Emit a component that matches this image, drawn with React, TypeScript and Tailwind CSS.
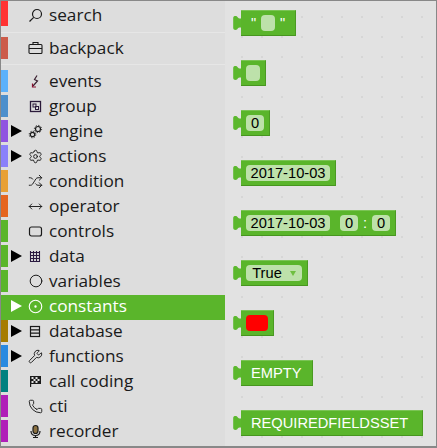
import {
  Circle,
  CircleDot,
  MoveHorizontal,
  Phone,
  Settings,
  Shuffle,
  Wrench,
} from 'lucide-react'
import type { ReactNode } from 'react'

const iconClass = 'w-[15px] h-[15px] stroke-[1.5]'

function SearchIcon() {
  return (
    <svg viewBox="0 0 15 15" className="w-[15px] h-[15px]" fill="none" stroke="currentColor" strokeWidth="1.200">
      <circle cx="9" cy="6" r="4.500" />
      <path d="M5.700 9.300 1.500 13.500" />
    </svg>
  )
}

function GroupIcon() {
  return (
    <svg viewBox="0 0 15 15" className="w-[15px] h-[15px]" fill="none" stroke="#2a1a3a">
      <rect x="2.500" y="2.500" width="10" height="10" strokeWidth="1.300" />
      <rect x="5" y="5" width="3" height="3" />
      <rect x="7.500" y="7.500" width="3" height="3" />
    </svg>
  )
}

function EventIcon() {
  return (
    <svg viewBox="0 0 15 15" className="w-[15px] h-[15px]" fill="none" stroke="#3a2030" strokeWidth="1.200">
      <path d="M9 1.500 6.500 5.500 9.500 7 5 12" />
      <path d="M4.500 9.500V13H8" stroke="#8a1030" />
    </svg>
  )
}

function BackpackIcon() {
  return (
    <svg viewBox="0 0 15 15" className="w-[15px] h-[15px]" fill="none" stroke="currentColor" strokeWidth="1.100">
      <rect x="1" y="3.500" width="13" height="9" rx="1" />
      <path d="M5 3.500v-2h5v2M1 7.500h13" />
    </svg>
  )
}

function EngineIcon() {
  return (
    <svg viewBox="0 0 15 15" className="w-[15px] h-[15px]" fill="none" stroke="currentColor">
      <circle cx="10" cy="5" r="2.500" strokeWidth="1.200" />
      <circle cx="10" cy="5" r="3.600" strokeWidth="1" strokeDasharray="1.200 1.600" />
      <circle cx="4.500" cy="10.500" r="2.200" strokeWidth="1.200" />
      <circle cx="4.500" cy="10.500" r="3.300" strokeWidth="1" strokeDasharray="1.200 1.400" />
    </svg>
  )
}

function ControlsIcon() {
  return (
    <svg viewBox="0 0 15 15" className="w-[15px] h-[15px]" fill="none" stroke="currentColor" strokeWidth="1.200">
      <rect x="1.500" y="3" width="12" height="9" rx="2" />
    </svg>
  )
}

function GridIcon() {
  return (
    <svg viewBox="0 0 15 15" className="w-[15px] h-[15px]" fill="none" stroke="#2a1a40" strokeWidth="1.100">
      <path d="M2.500 2v11M5.500 2v11M8.500 2v11M11.500 2v11M2 3.500h10M2 6.500h10M2 9.500h10M2 12.500h10" />
    </svg>
  )
}

function DatabaseIcon() {
  return (
    <svg viewBox="0 0 15 15" className="w-[15px] h-[15px]" fill="none" stroke="currentColor" strokeWidth="1.200">
      <rect x="2.500" y="2.500" width="9" height="10" />
      <path d="M2.500 5.800h9M2.500 9.200h9" />
    </svg>
  )
}

function FlagIcon() {
  return (
    <svg viewBox="0 0 15 15" className="w-[15px] h-[15px]" fill="#1a1a1a">
      <path d="M2 2h11v8H2zM2 10h1.200v3H2z" />
      <path
        fill="#e0e0e0"
        d="M3.500 3h2v2h-2zM7.500 3h2v2h-2zM5.500 5h2v2h-2zM9.500 5h2v2h-2zM3.500 7h2v2h-2zM7.500 7h2v2h-2z"
      />
    </svg>
  )
}

function MicIcon() {
  return (
    <svg viewBox="0 0 15 15" className="w-[15px] h-[15px]" fill="none" stroke="currentColor" strokeWidth="1.200">
      <rect x="5" y="1.500" width="5" height="8" rx="2.500" fill="#8a7040" />
      <path d="M3 7c0 3 2 4.500 4.500 4.500S12 10 12 7M7.500 11.500V13M5 13.500h5" />
    </svg>
  )
}

const categories: {
  label: string
  color: string
  icon: ReactNode
  arrow?: boolean
  selected?: boolean
}[] = [
  { label: 'events', color: 'bg-[#5cb1fa]', icon: <EventIcon /> },
  { label: 'group', color: 'bg-[#4c8fcc]', icon: <GroupIcon /> },
  { label: 'engine', color: 'bg-[#9053e0]', icon: <EngineIcon />, arrow: true },
  { label: 'actions', color: 'bg-[#8a80fa]', icon: <Settings className={iconClass} />, arrow: true },
  { label: 'condition', color: 'bg-[#e8a035]', icon: <Shuffle className={iconClass} /> },
  { label: 'operator', color: 'bg-[#e5651f]', icon: <MoveHorizontal className={iconClass} /> },
  { label: 'controls', color: 'bg-[#5ab52b]', icon: <ControlsIcon /> },
  { label: 'data', color: 'bg-[#5ab52b]', icon: <GridIcon />, arrow: true },
  { label: 'variables', color: 'bg-[#5ab52b]', icon: <Circle className="w-[14px] h-[14px] stroke-[1.7]" /> },
  { label: 'constants', color: 'bg-[#5ab52b]', icon: <CircleDot className="w-[15px] h-[15px] stroke-[1.8]" />, arrow: true, selected: true },
  { label: 'database', color: 'bg-[#a67c00]', icon: <DatabaseIcon />, arrow: true },
  { label: 'functions', color: 'bg-[#2a8ae0]', icon: <Wrench className={iconClass} />, arrow: true },
  { label: 'call coding', color: 'bg-[#00807f]', icon: <FlagIcon /> },
  { label: 'cti', color: 'bg-[#b01fb8]', icon: <Phone className={iconClass} /> },
  { label: 'recorder', color: 'bg-[#b01fb8]', icon: <MicIcon /> },
]

function Arrow({ selected }: { selected?: boolean }) {
  return (
    <svg viewBox="0 0 11 12" className={`w-[11px] h-3 ${selected ? 'fill-white' : 'fill-black'}`}>
      <path d="M0 0l11 6-11 6z" />
    </svg>
  )
}

function Row({
  label,
  color,
  icon,
  arrow,
  selected,
}: (typeof categories)[number]) {
  return (
    <div
      className={`flex h-[25px] ${selected ? 'bg-[#5ab52b] text-white' : 'text-[#1a1a1a]'}`}
    >
      <div className={`w-[7px] h-[22px] ${selected ? '' : color}`} />
      <div className="flex flex-1 h-[22px] items-center">
        <div className="w-5 pl-[3px]">{arrow ? <Arrow selected={selected} /> : null}</div>
        <div className="w-[15px] flex justify-center">{icon}</div>
        <span className="ml-[6px] leading-none">{label}</span>
      </div>
    </div>
  )
}

function Tab() {
  return (
    <svg viewBox="0 0 8 14" className="w-2 h-[14px] mt-[6px] fill-[#5cb82e]">
      <path d="M8 2.500H6.500C5.300 2.500 5 1.500 4 .6 2.800-.3.2 0 .2 2v10c0 2 2.600 2.300 3.800 1.400 1-.9 1.300-1.900 2.500-1.900H8z" />
    </svg>
  )
}

function Field({
  children,
  width,
  tone = 'bg-[#bde1aa]',
}: {
  children?: ReactNode
  width: string
  tone?: string
}) {
  return (
    <div className={`h-4 ${width} ${tone} rounded-[4px] flex items-center justify-center text-black`}>
      {children}
    </div>
  )
}

function Block({ width, children }: { width: string; children: ReactNode }) {
  return (
    <div className="flex h-[26px] ml-[8px] font-['Liberation_Sans',sans-serif] text-[14.667px] leading-none">
      <Tab />
      <div
        className={`${width} h-[26px] bg-[#5ab52b] border-t border-t-[#7bc455] border-r border-r-[#4a9a22] border-b border-b-[#47951f] flex items-center pl-[5px] text-white`}
      >
        {children}
      </div>
    </div>
  )
}

function PinnedRow({
  label,
  color,
  icon,
  className,
  barClass,
}: {
  label: string
  color: string
  icon: ReactNode
  className: string
  barClass: string
}) {
  return (
    <div className={`h-8 border-b border-b-[#e6e6e6] text-[#1a1a1a] flex ${className}`}>
      <div className={`w-[7px] ${barClass} ${color}`} />
      <div className="w-5" />
      <div className="w-[15px] flex justify-center items-center">{icon}</div>
      <span className="ml-[6px] leading-none self-center">{label}</span>
    </div>
  )
}

export default function App() {
  return (
    <div className="w-[437px] h-[448px] overflow-hidden border border-b-2 border-[#888] flex font-['Open_Sans',sans-serif] text-[17.2px]">
      <aside className="w-[224px] bg-[#dddddd] flex flex-col">
        <PinnedRow
          label="search"
          color="bg-[#ff3333]"
          icon={<SearchIcon />}
          className="pb-[3px]"
          barClass="h-[25px]"
        />
        <PinnedRow
          label="backpack"
          color="bg-[#cc5b4a]"
          icon={<BackpackIcon />}
          className="pt-[4px] pb-[5px]"
          barClass="h-[22px]"
        />
        <div className="flex flex-col mt-[5px]">
          {categories.map((category) => (
            <Row key={category.label} {...category} />
          ))}
        </div>
      </aside>
      <main className="flex-1 bg-[#e2e2e2] bg-[radial-gradient(circle,#d6d6d6_0.7px,transparent_1px)] bg-[length:20px_20px] bg-[position:7px_6px] flex flex-col pt-[9px] gap-6">
        <Block width="w-[55px]">
          <span className="w-[15px] text-center">"</span>
          <Field width="w-[14px]" />
          <span className="w-[15px] text-center">"</span>
        </Block>
        <Block width="w-[25px]">
          <Field width="w-[14px]" />
        </Block>
        <Block width="w-[29px]">
          <Field width="w-[18px]">0</Field>
        </Block>
        <Block width="w-[95px]">
          <Field width="w-[84px]">2017-10-03</Field>
        </Block>
        <Block width="w-[155px]">
          <Field width="w-[84px]">2017-10-03</Field>
          <div className="w-[10px]" />
          <Field width="w-[18px]">0</Field>
          <span className="w-[14px] text-center">:</span>
          <Field width="w-[18px]">0</Field>
        </Block>
        <Block width="w-[67px]">
          <Field width="w-[56px]">
            <span className="mr-[8px]">True</span>
            <svg viewBox="0 0 6 5" className="w-[6px] h-[5px] fill-[#6fbf40]">
              <path d="M0 0h6L3 5z" />
            </svg>
          </Field>
        </Block>
        <Block width="w-[33px]">
          <Field width="w-[22px]" tone="bg-[#ff0000]" />
        </Block>
        <Block width="w-[72px]">
          <span className="ml-[5px]">EMPTY</span>
        </Block>
        <Block width="w-[182px]">
          <span className="ml-[5px]">REQUIREDFIELDSSET</span>
        </Block>
      </main>
    </div>
  )
}
